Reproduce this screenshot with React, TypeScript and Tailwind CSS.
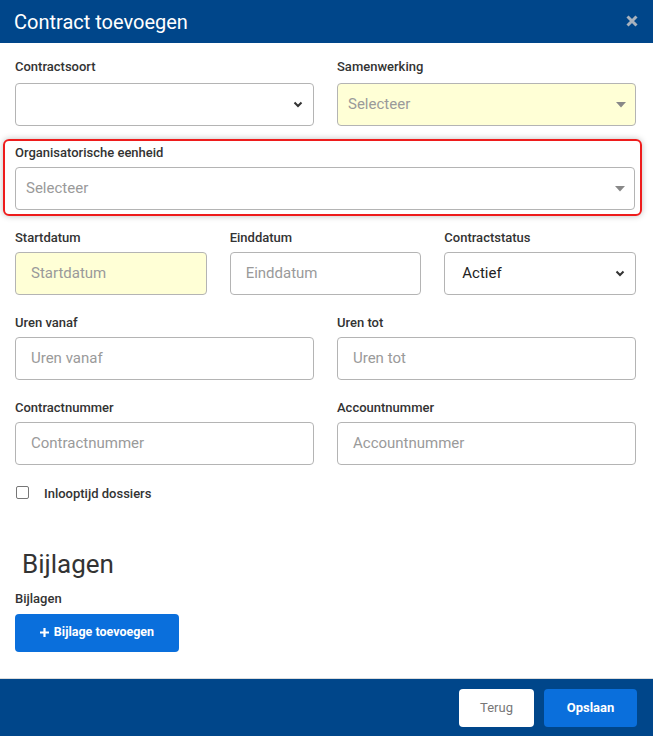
import React from "react"

function Label({ children, low }: { children: React.ReactNode; low?: boolean }) {
    return (
        <div className={`h-4 text-[13px] leading-4 font-medium text-[#333] ${low ? "mt-[2px]" : ""}`}>
            {children}
        </div>
    )
}

function Chevron() {
    return (
        <svg width="10" height="7" viewBox="0 0 10 7" className="shrink-0">
            <path d="M1.5 1.5 L5 5 L8.5 1.5" fill="none" stroke="#333" strokeWidth="2" />
        </svg>
    )
}

function Caret() {
    return (
        <svg width="10" height="6" viewBox="0 0 10 6" className="shrink-0">
            <path d="M0 0 H10 L5 5.5 Z" fill="#888" />
        </svg>
    )
}

function TextInput({ placeholder, yellow }: { placeholder: string; yellow?: boolean }) {
    return (
        <div
            className={`flex h-[43px] items-center rounded border border-[#b4b4b4] px-[15px] text-[15px] text-[#9a9a9a] ${
                yellow ? "bg-[#ffffd6]" : "bg-white"
            }`}
        >
            {placeholder}
        </div>
    )
}

function Select2({ yellow }: { yellow?: boolean }) {
    return (
        <div
            className={`flex h-[43px] items-center justify-between rounded border border-[#b4b4b4] pr-[9px] pl-[10px] text-[15px] text-[#9a9a9a] ${
                yellow ? "bg-[#ffffd6]" : "bg-white"
            }`}
        >
            <span>Selecteer</span>
            <Caret />
        </div>
    )
}

function NativeSelect({ value }: { value?: string }) {
    return (
        <div className="flex h-[43px] items-center justify-between rounded border border-[#b4b4b4] bg-white pr-[10px] pl-[17px] text-[15px] text-[#222]">
            <span>{value ?? ""}</span>
            <Chevron />
        </div>
    )
}

function Field({ label, children, first }: { label: string; children: React.ReactNode; first?: boolean }) {
    return (
        <div className={`flex flex-col ${first ? "gap-2" : "gap-[6px]"}`}>
            <Label low={!first}>{label}</Label>
            {children}
        </div>
    )
}

export default function App() {
    return (
        <div className="flex h-[736px] w-[653px] flex-col bg-white font-['Roboto',sans-serif]">
            <div className="flex h-[43px] items-center justify-between bg-[#00468a] pr-[15px] pl-[14px]">
                <h1 className="text-[20px] text-white">Contract toevoegen</h1>
                <svg width="12" height="12" viewBox="0 0 12 12" className="mb-[1px]">
                    <path d="M1.5 1.5 L10.5 10.5 M10.5 1.5 L1.5 10.5" stroke="#a9b2bd" strokeWidth="3" />
                </svg>
            </div>

            <div className="flex-1">
                <div className="grid grid-cols-2 gap-x-[23px] px-[15px] pt-4 pr-[17px]">
                    <Field label="Contractsoort" first>
                        <NativeSelect />
                    </Field>
                    <Field label="Samenwerking" first>
                        <Select2 yellow />
                    </Field>
                </div>

                <div className="mt-[13px] ml-[3px] w-[639px] rounded-md border-2 border-[#ee1c1c] pt-[2px] pr-[5px] pb-[4px] pl-[10px] shadow-[0_0_6px_rgba(0,0,0,0.25)]">
                    <Field label="Organisatorische eenheid">
                        <Select2 />
                    </Field>
                </div>

                <div className="mt-[12px] grid grid-cols-3 gap-x-[23px] px-[15px] pr-[17px]">
                    <Field label="Startdatum">
                        <TextInput placeholder="Startdatum" yellow />
                    </Field>
                    <Field label="Einddatum">
                        <TextInput placeholder="Einddatum" />
                    </Field>
                    <Field label="Contractstatus">
                        <NativeSelect value="Actief" />
                    </Field>
                </div>

                <div className="mt-[18px] grid grid-cols-2 gap-x-[23px] px-[15px] pr-[17px]">
                    <Field label="Uren vanaf">
                        <TextInput placeholder="Uren vanaf" />
                    </Field>
                    <Field label="Uren tot">
                        <TextInput placeholder="Uren tot" />
                    </Field>
                </div>

                <div className="mt-[18px] grid grid-cols-2 gap-x-[23px] px-[15px] pr-[17px]">
                    <Field label="Contractnummer">
                        <TextInput placeholder="Contractnummer" />
                    </Field>
                    <Field label="Accountnummer">
                        <TextInput placeholder="Accountnummer" />
                    </Field>
                </div>

                <div className="mt-[16px] flex items-center px-[16px]">
                    <div className="h-[13px] w-[13px] rounded-[2px] border border-[#777] bg-white" />
                    <span className="mt-[3px] ml-[15px] text-[13px] font-medium text-[#333]">
                        Inlooptijd dossiers
                    </span>
                </div>

                <h2 className="mt-[45px] pl-[22px] text-[26px] leading-[30px] text-[#333]">Bijlagen</h2>

                <div className="mt-[12px] px-[15px]">
                    <Label>Bijlagen</Label>
                    <button className="mt-[7px] flex h-[38px] w-[164px] items-center justify-center rounded bg-[#0a6fdc] text-[12.5px] font-bold text-white">
                        <svg width="9" height="9" viewBox="0 0 9 9" className="mr-[5px]">
                            <path d="M4.5 0 V9 M0 4.5 H9" stroke="white" strokeWidth="2.2" />
                        </svg>
                        Bijlage toevoegen
                    </button>
                </div>
            </div>

            <div className="flex h-[58px] items-center justify-end gap-[10px] border-t border-[#dcdcdc] bg-[#00468a] pr-[16px]">
                <button className="h-[38px] w-[75px] rounded bg-white text-[13px] text-[#777]">Terug</button>
                <button className="h-[38px] w-[93px] rounded bg-[#0a6fdc] text-[13px] font-bold text-white">
                    Opslaan
                </button>
            </div>
        </div>
    )
}
